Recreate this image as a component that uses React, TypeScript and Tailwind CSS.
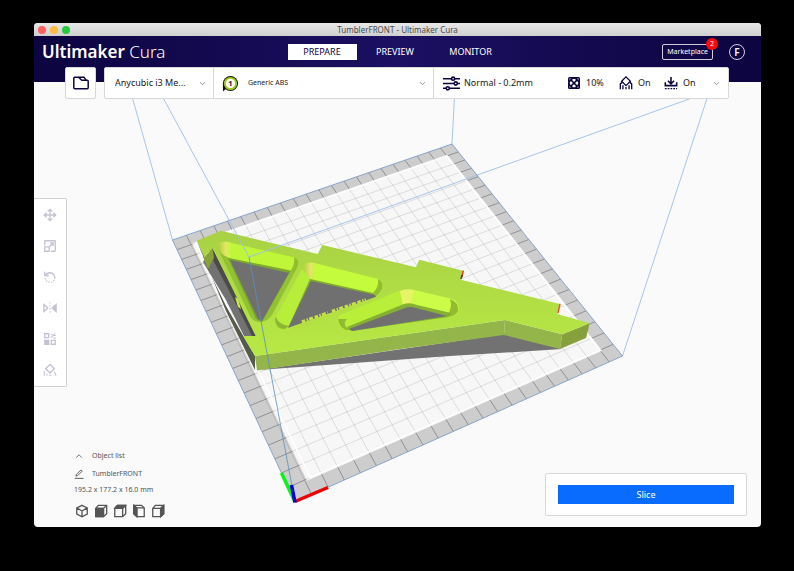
import type { ReactNode } from "react";
import { ChevronDown, ChevronUp } from "lucide-react";

type Point = [number, number];

const CELLS = 22;

// plate corners on screen: front-left, front-right, back-right, back-left
const PLATE: Point[] = [
  [295, 502],
  [622.5, 356],
  [452, 144],
  [172.5, 240],
];

// maps plate coordinates (in cells) to screen coordinates
function project(u: number, v: number): Point {
  const [[x0, y0], [x1, y1], [x2, y2], [x3, y3]] = PLATE;
  const s = u / CELLS;
  const t = v / CELLS;
  const dx1 = x1 - x2;
  const dx2 = x3 - x2;
  const dx3 = x0 - x1 + x2 - x3;
  const dy1 = y1 - y2;
  const dy2 = y3 - y2;
  const dy3 = y0 - y1 + y2 - y3;
  const det = dx1 * dy2 - dx2 * dy1;
  const g = (dx3 * dy2 - dx2 * dy3) / det;
  const h = (dx1 * dy3 - dx3 * dy1) / det;
  const w = g * s + h * t + 1;
  return [
    ((x1 - x0 + g * x1) * s + (x3 - x0 + h * x3) * t + x0) / w,
    ((y1 - y0 + g * y1) * s + (y3 - y0 + h * y3) * t + y0) / w,
  ];
}

function quad(u0: number, v0: number, u1: number, v1: number) {
  return [project(u0, v0), project(u1, v0), project(u1, v1), project(u0, v1)]
    .map((p) => p.join(","))
    .join(" ");
}

function segment(a: Point, b: Point) {
  return `M${a.join(" ")}L${b.join(" ")}`;
}

const steps = Array.from({ length: CELLS - 1 }, (_, i) => i + 1);
const gridPath = steps
  .map(
    (i) =>
      segment(project(i, 0), project(i, CELLS)) +
      segment(project(0, i), project(CELLS, i)),
  )
  .join("");

// short marks on the grey margin around the printable area
const tickPath = steps
  .map(
    (i) =>
      segment(project(i, 0), project(i, 0.9)) +
      segment(project(i, CELLS - 0.9), project(i, CELLS)) +
      segment(project(0, i), project(1.1, i)) +
      segment(project(CELLS - 0.9, i), project(CELLS, i)),
  )
  .join("");

const HOLE_A =
  "M218 249C216 243 222 241 228 242L293 257Q301 260 297 268L272 315Q267 322 260 322Q253 322 250 316Z";
const HOLE_B =
  "M302 269C305 262 311 262 318 264L378 279C385 282 384 292 376 296L293 327Q281 332 277 326Q273 322 277 315Z";
const HOLE_C =
  "M340 315L399 291Q406 288 414 290L452 299C461 302 461 315 452 317L352 331C342 333 333 321 340 315Z";

const PART_TOP =
  "M196.700 240.700L221 230.700L317.700 254L322.300 245L416 267.300L419.300 259.700L463.300 270.700L460.700 279.700L560 304L557.300 314L589.700 323.300L562.300 334.300L505 320L400 335L255 356L243.300 336L255.700 336L212.500 248L204.500 257Z";

function Model() {
  return (
    <g>
      {/* shadow on the plate */}
      <path
        d="M203 262L212 248L258 336L245 338L226 300ZM258 370L505 334L562 349L450 356Z"
        fill="#727272"
      />
      <path d="M212.500 248L255.700 336H252L238 308L211 256Z" fill="#4b4c48" />
      <path d="M235 297L238 299L241 309L238 307Z" fill="#cbe84b" />
      <path
        d="M196.700 240.700L204.500 257L208 269L226 306L243.300 336L255 356V370L226 311Z"
        fill="#565c4c"
      />
      <path d="M204.500 257L212.500 248L214 258L208 269L203 257Z" fill="#87a336" />
      {/* side walls */}
      <path d="M255 356L400 335L505 320L504 335L400 349L257 370.500Z" fill="#93b54a" />
      <path d="M505 320L562.300 334.300L560 349L504 335Z" fill="#94b54a" />
      <path d="M562.300 334.300L589.700 323.300L586 338L560 349Z" fill="#86a03e" />
      <path d={PART_TOP} fill="url(#part-top)" />

      {/* left window */}
      <path d={HOLE_A} fill="#92c134" />
      <path
        d="M218 249C216 243 222 241 228 242L293 257Q301 260 297 268L294 271L229 258Z"
        fill="#c0f63a"
      />
      <path d="M218 249C216 243 222 241 228 242L231 243L230 258Q222 256 218 249Z" fill="url(#round)" />
      <path d="M291 270Q295 264 294 257.500Q301 260 297 268L294 273Z" fill="#93bd30" />
      <path d="M228 258L291 271L288 275L262 322L256 319Z" fill="#7ca52d" />
      <path d="M230 260L289 273L262 321L258 319Z" fill="#707070" />

      {/* middle window */}
      <path d={HOLE_B} fill="#b9ea3c" />
      <path d="M302 269L277 315Q273 322 277 326Q281 331 288 327L311 280Z" fill="#b7ee39" />
      <path d="M275 319Q275 329 285 329L289 326Q279 325 276 317Z" fill="#8cb633" />
      <path
        d="M302 269C305 262 311 262 318 264L378 279Q384 282 381 289L374 294L311 279Z"
        fill="#c4fb3c"
      />
      <path d="M302 269C305 262 311 262 316 264L313 279L308 276Z" fill="url(#round)" />
      <path d="M373 293Q379 287 378 279Q384 282 382 289Q380 293 376 296Z" fill="#93bd30" />
      <path d="M310 279L373 293L376 296L288 328Z" fill="#80aa2e" />
      <path d="M311 281L375 295L376 297L288 328Z" fill="#707070" />
      <path
        d="M302 322L328 313M332 311.500L366 300"
        stroke="#c9e04c"
        strokeWidth="3.500"
        strokeDasharray="3.500 1.500 1.500 1.200 4 1.800"
      />
      <path d="M288 328L376 297L377 300L294 331Z" fill="#b4e044" />

      {/* right window */}
      <path d={HOLE_C} fill="#b9ef38" />
      <path d="M407 290L414 290L452 299Q460 302 458 309L450 316L410 306Z" fill="#ccfb48" />
      <path d="M400 291Q407 288 414 290L410 305L403 306Z" fill="#e6f566" />
      <path d="M450 299Q459 302 458 311Q454 318 447 316Q453 307 450 299Z" fill="#95bc31" />
      <path d="M338 319Q340 332 352 330L346 327Q343 323 347 319Z" fill="#8fbb31" />
      <path d="M347 327L404 304Q410 302 417 305L451 313L449 317L352 331Z" fill="#86b032" />
      <path d="M349 329L405 308Q410 306 416 308L447 316L352 331Z" fill="#707070" />

      <path d="M463.300 270.700L462 277" stroke="#e03a1e" strokeWidth="1.500" />
      <path d="M462 275L461 279" stroke="#444" strokeWidth="1.500" />
      <path d="M560 304L558 313" stroke="#f0562f" strokeWidth="1.500" />
    </g>
  );
}

function Scene() {
  return (
    <svg
      className="absolute inset-0 h-full w-full"
      viewBox="34 36 727 491"
      aria-label="Build plate with TumblerFRONT"
    >
      <defs>
        <linearGradient id="part-top" x1="0" y1="0" x2="0" y2="1">
          <stop offset="0" stopColor="#a9d144" />
          <stop offset="1" stopColor="#b7e944" />
        </linearGradient>
        <linearGradient id="round">
          <stop offset="0" stopColor="#a6cc3b" />
          <stop offset="0.600" stopColor="#e6e468" />
          <stop offset="1" stopColor="#c2f93b" />
        </linearGradient>
      </defs>
      <polygon points={quad(0, 0, CELLS, CELLS)} fill="#cdcdcd" />
      <polygon points={quad(1.1, 0.9, CELLS - 0.9, CELLS - 0.9)} fill="#f7f7f7" />
      <path d={gridPath} stroke="#000" strokeOpacity="0.140" strokeWidth="0.800" />
      <path d={tickPath} stroke="#000" strokeOpacity="0.250" strokeWidth="0.800" />
      <polygon
        points={quad(1.35, 1, CELLS - 1, CELLS - 1)}
        fill="none"
        stroke="#fff"
        strokeWidth="1.500"
      />
      <Model />
      <g fill="none" stroke="#9cc0ea" strokeWidth="0.900">
        <path d="M172.500 240L124 68M452 144L456 68M622.500 356L717 68" />
        <path d="M147 68L249 257L692 98" />
        <polygon points={quad(0, 0, CELLS, CELLS)} stroke="#7d9fc8" />
      </g>
      <path d="M249 257L295 502" stroke="#5b8fc0" strokeWidth="0.800" />
      <path d="M295 502L281.500 473" stroke="#0cf01c" strokeWidth="3.500" />
      <path d="M295 501.500L328 487.500" stroke="#ee0000" strokeWidth="3.500" />
      <path d="M295 502.500L291.500 485" stroke="#0000e0" strokeWidth="3.500" />
    </svg>
  );
}

function Icon({ children, className }: { children: ReactNode; className: string }) {
  return (
    <svg
      viewBox="0 0 16 16"
      className={className}
      fill="none"
      stroke="currentColor"
      strokeWidth="1.500"
      aria-hidden="true"
    >
      {children}
    </svg>
  );
}

const tools = [
  {
    label: "Move",
    icon: (
      <path d="M8 1.500V14.500M1.500 8H14.500M5.500 4L8 1.500L10.500 4M5.500 12L8 14.500L10.500 12M4 5.500L1.500 8L4 10.500M12 5.500L14.500 8L12 10.500" />
    ),
  },
  {
    label: "Scale",
    icon: (
      <path d="M2 7V2.500Q2 2 2.500 2H13.500Q14 2 14 2.500V13.500Q14 14 13.500 14H9M2 9H7V14H2ZM7.500 8.500L11.500 4.500M8 4.500H11.500V8" />
    ),
  },
  {
    label: "Rotate",
    icon: (
      <>
        <path d="M2 2V6.500H6.500M2.500 6C5 2.500 10 2 12.500 5.500Q14 8 13.300 10" />
        <path d="M13 11.500Q10 15 6 13.800Q3 12.500 2.500 9.500" strokeDasharray="1.500 1.500" />
      </>
    ),
  },
  {
    label: "Mirror",
    icon: (
      <>
        <path d="M1 4L5.500 8L1 12Z" />
        <path d="M8 1V15" strokeDasharray="2 1.500" strokeWidth="1" />
        <path d="M15 4L10.500 8L15 12Z" fill="currentColor" />
      </>
    ),
  },
  {
    label: "Per model settings",
    icon: (
      <>
        <path d="M2 2H6.500V6.500H2ZM9.500 9.500H14V14H9.500Z" />
        <path d="M2 9.500H6.500V14H2Z" fill="currentColor" />
        <path d="M9 2.500H11M12.500 4H14.500M9 6.500L14 1.500M12 7H14.500" strokeWidth="1.200" />
      </>
    ),
  },
  {
    label: "Support blocker",
    icon: (
      <>
        <path d="M8 1.500L13 6.500L8 11.500L3 6.500Z" />
        <path d="M1.500 9V14.500M4.500 12V14.500M7 14H9.500M11 14H12M13 10L15 14.500" strokeWidth="1.200" />
      </>
    ),
  },
];

const views = [
  { label: "3D view", fill: "" },
  { label: "Front view", fill: "M2 5H10.500V14.500H2Z" },
  { label: "Top view", fill: "M2 5L5 1.500H14.500L11 5Z" },
  { label: "Left view", fill: "M2 1.500L5.500 4.500V14.500L2 11Z" },
  { label: "Right view", fill: "M11 5L14.500 1.500V11L11 14.500Z" },
];

function ViewIcon({ index }: { index: number }) {
  if (index === 0) {
    return (
      <Icon className="size-[14px]">
        <path d="M8 1.500L14 4.500V11.500L8 14.700L2 11.500V4.500ZM2 4.500L8 8L14 4.500M8 8V14.500" />
      </Icon>
    );
  }
  const mirrored = index === 3;
  return (
    <Icon className="size-[14px]">
      {mirrored ? (
        <path d="M2 1.500H11L14 4.500V14.500H5.500L2 11ZM2 1.500L5.500 4.500H14M5.500 4.500V14.500" />
      ) : (
        <path d="M2 5L5 1.500H14.500V11L11 14.500H2ZM2 5H11V14.500M11 5L14.500 1.500" />
      )}
      <path d={views[index].fill} fill="currentColor" />
    </Icon>
  );
}

function Header() {
  return (
    <header className="relative h-[46px] bg-linear-to-r from-[#0c0540] via-[#1b1062] to-[#0c0540]">
      <div className="grid h-[31px] grid-cols-[1fr_auto_1fr] items-center px-2 text-white">
        <h1 className="text-[17px] leading-6 font-semibold">
          Ultimaker <span className="font-light">Cura</span>
        </h1>
        <nav className="flex gap-1 text-[9px] leading-4">
          <button className="w-[69px] bg-white text-[#0c0540]">PREPARE</button>
          <button className="w-[69px]">PREVIEW</button>
          <button className="w-[74px]">MONITOR</button>
        </nav>
        <div className="flex items-center justify-end gap-4 pr-2">
          <button className="relative rounded-xs border border-white/80 px-1 text-[7px] leading-[14px]">
            Marketplace
            <span className="absolute -top-[7px] -right-[6px] size-3 rounded-full bg-[#fa0a0a] text-[7px] leading-3">
              2
            </span>
          </button>
          <button
            className="size-4 rounded-full border border-white/80 text-[10px] leading-[14px] font-semibold"
            aria-label="Account"
          >
            F
          </button>
        </div>
      </div>
    </header>
  );
}

function ConfigBar() {
  return (
    <div className="relative -mt-[15px] flex h-8 gap-2 pr-8 pl-[31px] text-[#0c0540]">
      <button
        className="flex w-[31px] items-center justify-center rounded-xs border border-[#d8d8d8] bg-white"
        aria-label="Open file"
      >
        <svg
          viewBox="0 0 18 14"
          className="h-[14px] w-[18px]"
          fill="none"
          stroke="currentColor"
          strokeWidth="1.500"
          strokeLinejoin="round"
          aria-hidden="true"
        >
          <path d="M2 1.200H6.500L9.800 4.200H15.200Q16.200 4.200 16.200 5.200V11.800Q16.200 12.800 15.200 12.800H2.800Q1.800 12.800 1.800 11.800V1.200" />
          <path d="M6.500 1.200H12L14 4.200" />
        </svg>
      </button>

      <div className="flex flex-1 rounded-xs border border-[#d8d8d8] bg-white">
        <div className="flex w-[109px] items-center border-r border-[#d8d8d8] pr-[6px]">
          <select
            aria-label="Printer"
            className="h-full min-w-0 flex-1 appearance-none pl-[10px] text-[9px] text-[#191919]"
          >
            <option>Anycubic i3 Me...</option>
          </select>
          <ChevronDown className="size-[9px] text-[#777]" />
        </div>
        <div className="flex flex-1 items-center border-r border-[#d8d8d8] pr-[6px] pl-2">
          <svg viewBox="0 0 18 18" className="size-[17px]" aria-hidden="true">
            <path d="M1 9V17.500L5 14Z" fill="#111" />
            <circle cx="9" cy="9" r="8" fill="#111" />
            <circle cx="9" cy="9" r="6" fill="#fff" stroke="#9dcb1c" strokeWidth="2" />
            <text x="9" y="12" textAnchor="middle" fontSize="8" fontWeight="700" fill="#111">
              1
            </text>
          </svg>
          <select
            aria-label="Material"
            className="h-full min-w-0 flex-1 appearance-none pl-[9px] text-[7px] text-[#191919]"
          >
            <option>Generic ABS</option>
          </select>
          <ChevronDown className="size-[9px] text-[#777]" />
        </div>
        <button className="flex w-[294px] items-center pr-[7px] pl-[9px] text-[9px] text-[#191919]">
          <Icon className="size-[17px] text-[#0c0540]">
            <path d="M0 3.500H8M11 3.500H16M0 8H10.500M13.500 8H16M0 12.500H3M6 12.500H16" />
            <circle cx="9.500" cy="3.500" r="1.500" />
            <circle cx="12" cy="8" r="1.500" />
            <circle cx="4.500" cy="12.500" r="1.500" />
          </Icon>
          <span className="ml-1 flex-1 text-left">Normal - 0.2mm</span>
          <svg viewBox="0 0 16 16" className="size-3" aria-hidden="true">
            <rect width="16" height="16" rx="2" fill="#0c0540" />
            <path
              d="M8 6.500L5.500 4L6.500 2.500H9.500L10.500 4ZM8 9.500L5.500 12L6.500 13.500H9.500L10.500 12ZM6.500 8L4 5.500L2.500 6.500V9.500L4 10.500ZM9.500 8L12 5.500L13.500 6.500V9.500L12 10.500Z"
              fill="#fff"
            />
            <path d="M2 2H4L2 4ZM14 2V4L12 2ZM2 14V12L4 14ZM14 14H12L14 12Z" fill="#fff" />
          </svg>
          <span className="ml-[6px] w-[33px] text-left">10%</span>
          <Icon className="size-[14px] text-[#0c0540]">
            <path d="M8 1L13 6L8 11L3 6Z" />
            <path d="M1.500 15V9L4 7M4.500 15V10.500M8 15V12.500M11.500 15V10.500M14.500 15V9L12 7" />
          </Icon>
          <span className="ml-[5px] w-[26px] text-left">On</span>
          <Icon className="size-[14px] text-[#0c0540]">
            <path d="M8 1V8.500M4.500 5.500L8 9L11.500 5.500M1.500 7V11H14.500V7" strokeWidth="1.800" />
            <path d="M1 14.500H15" strokeDasharray="2 1.200" />
          </Icon>
          <span className="ml-[5px] w-[29px] text-left">On</span>
          <ChevronDown className="size-[9px] text-[#777]" />
        </button>
      </div>
    </div>
  );
}

export default function App() {
  return (
    <div className="flex min-h-screen flex-col bg-black pt-[23px] pr-[33px] pb-11 pl-[34px] font-['Noto_Sans','Open_Sans',sans-serif]">
      <div className="flex flex-1 flex-col overflow-hidden rounded-sm bg-[#fafafa]">
        <div className="relative flex h-[13px] items-center bg-linear-to-b from-[#e8e8e8] to-[#d0d0d0] px-1">
          <div className="flex gap-1">
            <button aria-label="Close" className="size-2 rounded-full bg-[#fc615d]" />
            <button aria-label="Minimize" className="size-2 rounded-full bg-[#fdbc40]" />
            <button aria-label="Zoom" className="size-2 rounded-full bg-[#28c840]" />
          </div>
          <p className="flex-1 pr-8 text-center text-[8px] leading-3 text-[#4a4a4a]">
            TumblerFRONT - Ultimaker Cura
          </p>
        </div>

        <main className="relative flex flex-1 flex-col">
          <Scene />
          <Header />
          <ConfigBar />

          <div className="relative mt-[99px] flex w-[33px] flex-col items-center gap-[17px] rounded-r-xs border border-l-0 border-[#d0d0d6] bg-white py-[9px] text-[#c3c2d2]">
            {tools.map((tool) => (
              <button key={tool.label} aria-label={tool.label}>
                <Icon className="size-[14px]">{tool.icon}</Icon>
              </button>
            ))}
          </div>

          <div className="relative mt-auto flex items-end justify-between pr-[14px] pb-[9px] pl-10 text-[7px] text-[#555]">
            <div>
              <button className="flex h-4 items-center gap-2">
                <ChevronUp className="size-[10px]" />
                Object list
              </button>
              <button className="mt-[2px] flex h-4 items-center gap-2">
                <Icon className="size-[10px]">
                  <path d="M1 15H15M3 11.500L4 8.500L11 1.500L13 3.500L6 10.500Z" />
                </Icon>
                TumblerFRONT
              </button>
              <p className="leading-4">195.2 x 177.2 x 16.0 mm</p>
              <div className="mt-[6px] flex gap-[5px] pl-px">
                {views.map((view, index) => (
                  <button key={view.label} aria-label={view.label}>
                    <ViewIcon index={index} />
                  </button>
                ))}
              </div>
            </div>
            <div className="mb-[2px] w-[202px] rounded-xs border border-[#d8d8d8] bg-white px-3 py-[11px]">
              <button className="block w-full bg-[#0a6cff] text-[9px] leading-[19px] text-white">
                Slice
              </button>
            </div>
          </div>
        </main>
      </div>
    </div>
  );
}
